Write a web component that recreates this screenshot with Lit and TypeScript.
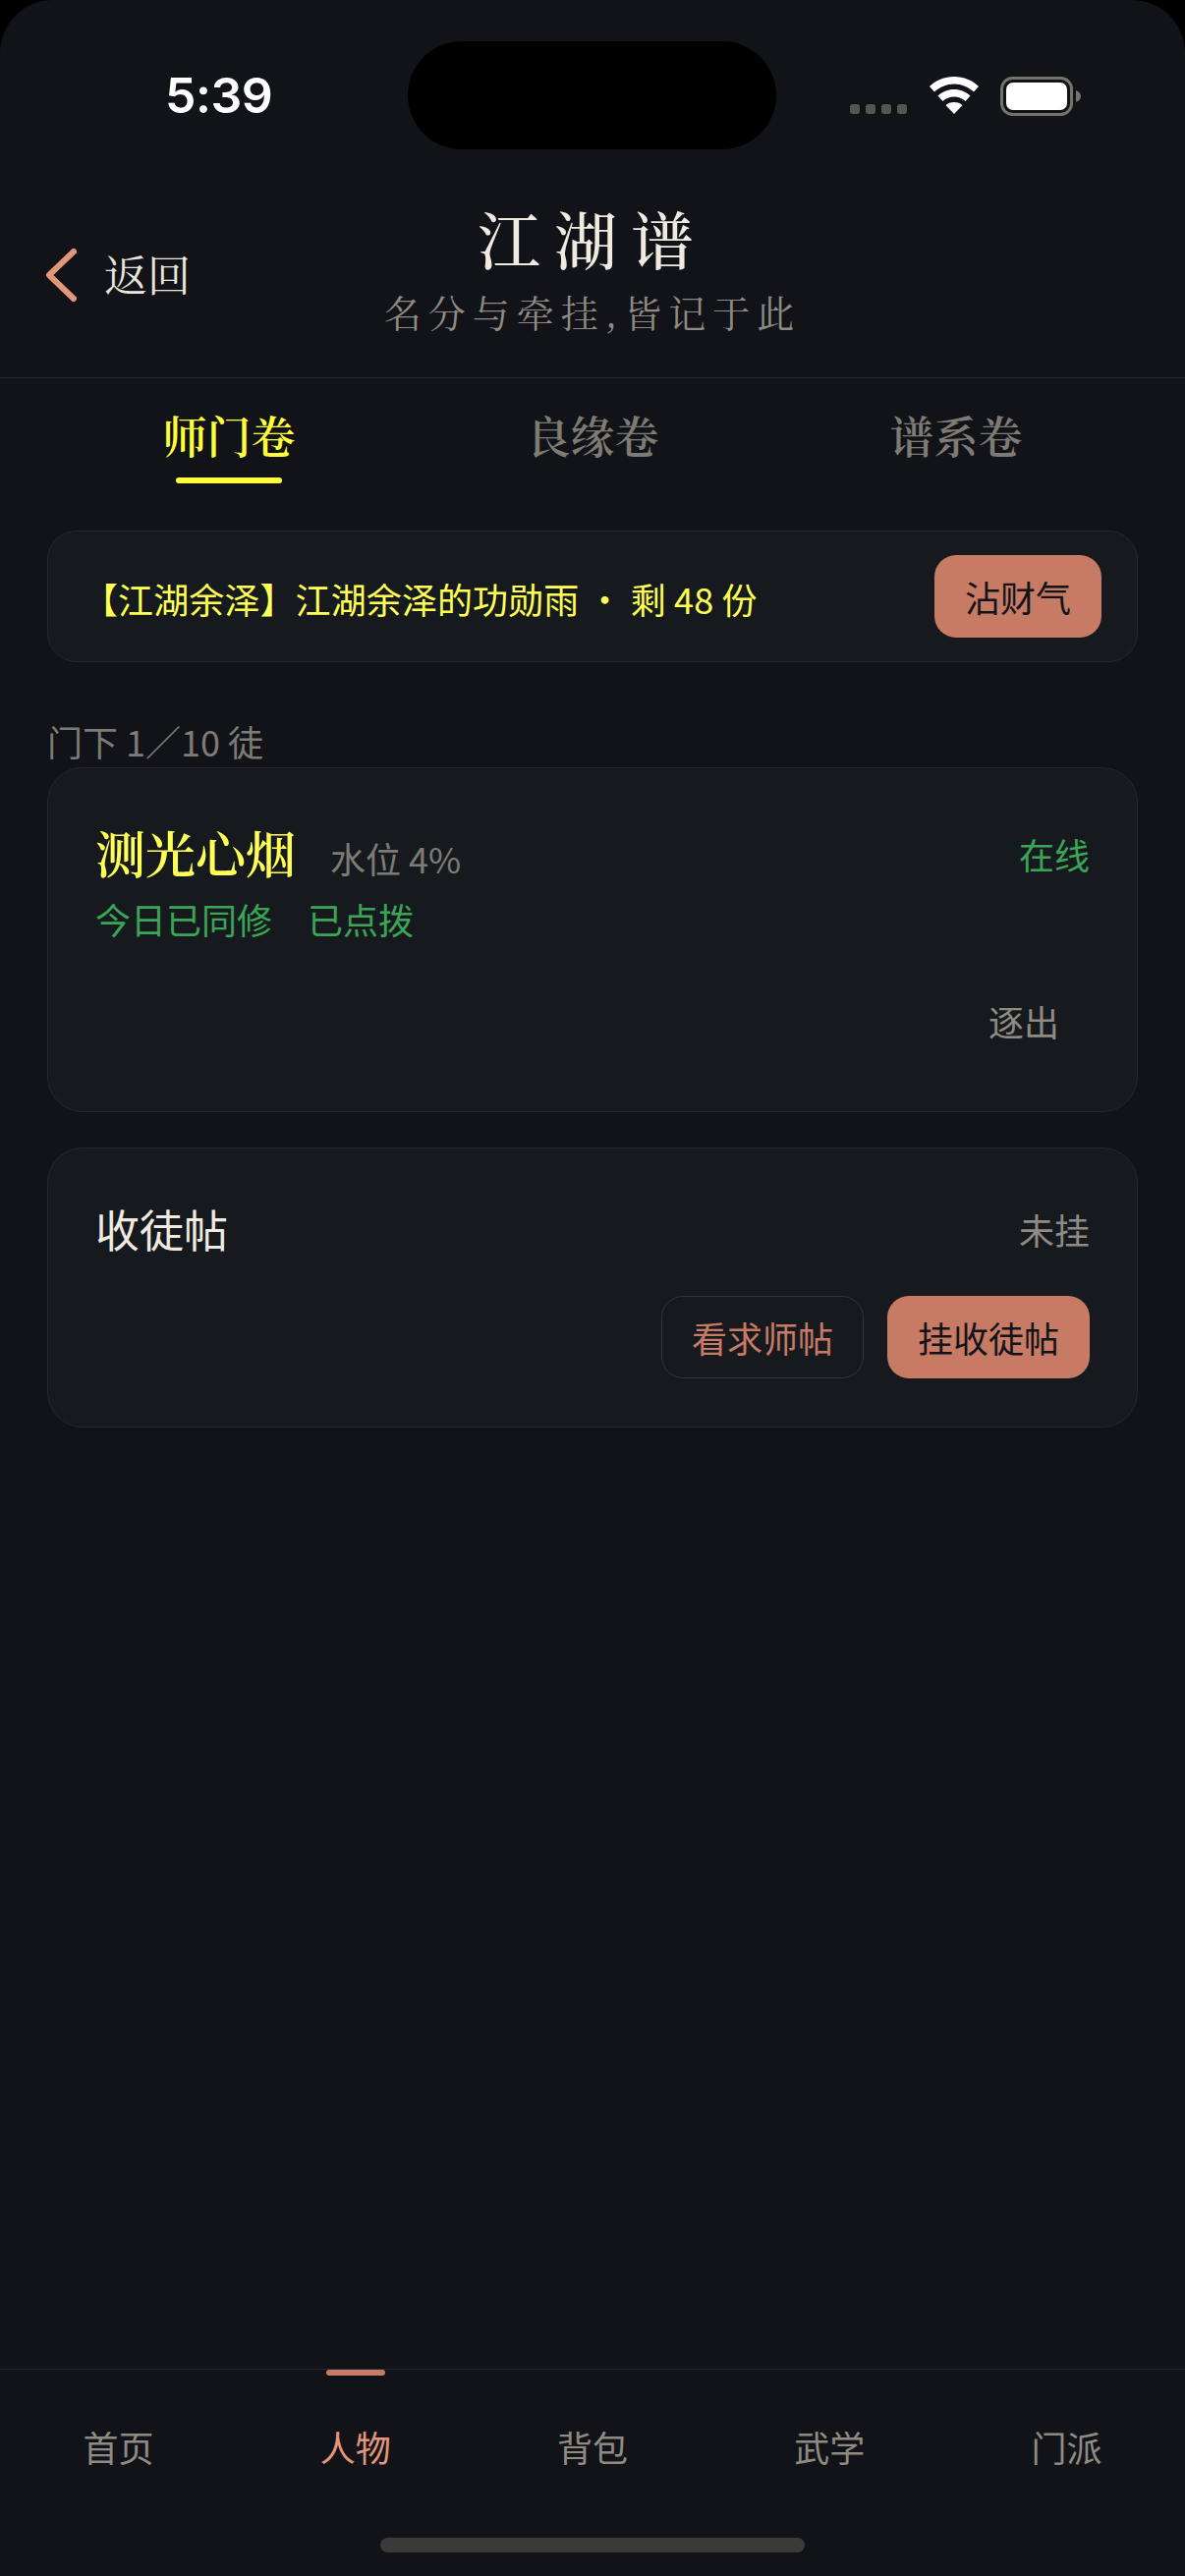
import { LitElement, html, css, svg } from "lit";
import { customElement } from "lit/decorators.js";

@customElement("app-root")
export class AppRoot extends LitElement {
  static styles = css`
    :host { display: block; width: 1206px; height: 2622px; background: #000; overflow: hidden;
      --sans: "Noto Sans CJK SC", "Noto Sans", sans-serif;
      --serif: "Noto Serif CJK SC", "Noto Serif SC", "Noto Sans CJK SC", serif;
      font-family: var(--sans); }
    * { box-sizing: border-box; }
    .phone { position: relative; width: 1206px; height: 2622px; background: #111318; border-radius: 54px 54px 0 0; overflow: hidden; display: flex; flex-direction: column; }
    .status { height: 188px; flex: none; display: flex; justify-content: space-between; padding: 0 104px 0 168px; }
    .time { font: 600 50px/52px Inter, "Liberation Sans", sans-serif; color: #fff; margin-top: 71px; letter-spacing: -.5px; }
    .island { position: absolute; left: 415px; top: 42px; width: 375px; height: 110px; border-radius: 55px; background: #000; }
    .sys { display: flex; align-items: flex-start; margin-top: 78px; }
    .dots { display: flex; gap: 6px; margin-top: 28px; margin-right: 22px; }
    .dots i { display: block; width: 10px; height: 10px; border-radius: 3px; background: #55564f; }
    .wifi { width: 52px; height: 38px; margin-right: 21px; }
    .batt { width: 84px; height: 40px; }
    .head { position: relative; height: 197px; flex: none; border-bottom: 1px solid #272a2d; display: flex; flex-direction: column; align-items: center; }
    .title { font: 500 64px/80px var(--serif); letter-spacing: 14px; color: #f0ebe0; margin-top: 13px; }
    .sub { font: 400 38px/52px var(--serif); letter-spacing: 7px; color: #8f8b82; margin-top: 10px; }
    .back { position: absolute; left: 46px; top: 60px; display: flex; align-items: center; gap: 28px; font: 400 44px/56px var(--serif); color: #e9e5da; }
    .back svg { width: 32px; height: 54px; display: block; margin-top: 5px; }
    .tabs { display: grid; grid-template-columns: repeat(3, 1fr); padding: 0 48px; height: 155px; flex: none; }
    .tab { display: flex; flex-direction: column; align-items: center; padding-top: 28px; font: 600 45px/60px var(--serif); color: #7e7b74; }
    .tab.on { color: #ffff3c; }
    .tab i { display: block; width: 108px; height: 6px; border-radius: 3px; background: #ffff3c; margin-top: 13px; }
    .content { flex: 1; padding: 0 48px; display: flex; flex-direction: column; }
    .card { background: #161a1f; border: 1px solid #25282b; }
    .banner { height: 134px; border-radius: 30px; display: flex; align-items: center; justify-content: space-between; padding: 0 36px 0 35px; font-size: 36px; color: #ffff55; }
    .banner span { margin-top: 4px; letter-spacing: .1px; }
    .btn { height: 84px; border-radius: 22px; font-size: 36px; display: flex; align-items: center; justify-content: center; background: #c77a64; color: #12141a; }
    .btn.ghost { background: transparent; border: 1px solid #33373a; color: #c77a64; }
    .banner .btn { width: 170px; }
    .label { font-size: 36px; line-height: 46px; color: #7e7b74; margin-top: 57px; height: 50px; }
    .disciple { height: 351px; border-radius: 36px; padding: 0 48px; margin-bottom: 36px; }
    .row { display: flex; align-items: flex-start; justify-content: space-between; }
    .row1 { padding-top: 50px; }
    .who { display: flex; align-items: baseline; gap: 35px; }
    .name { font: 600 51px/70px var(--serif); color: #ffff55; }
    .lv { font-size: 36px; line-height: 60px; color: #7e7b74; }
    .green { color: #3aa555; font-size: 36px; line-height: 50px; }
    .online { margin-top: 12px; }
    .marks { display: flex; gap: 36px; margin-top: 7px; }
    .kick { text-align: right; padding-right: 31px; margin-top: 54px; font-size: 36px; line-height: 50px; color: #8f8b82; }
    .post { height: 285px; border-radius: 36px; padding: 0 48px; }
    .post .row { height: 150px; align-items: center; padding-top: 14px; }
    .pname { font-size: 45px; line-height: 60px; color: #f0ebe0; }
    .pstate { font-size: 36px; color: #8f8b82; }
    .acts { display: flex; justify-content: flex-end; gap: 24px; }
    .acts .btn { width: 206px; }
    .nav { height: 211px; flex: none; border-top: 1px solid #272a2d; display: grid; grid-template-columns: repeat(5, 1fr); position: relative; }
    .nav div { position: relative; display: flex; justify-content: center; padding-top: 53px; font-size: 36px; line-height: 50px; color: #8f8b82; }
    .nav div.on { color: #e4967a; }
    .nav div.on::before { content: ""; position: absolute; top: 0; left: 91px; width: 60px; height: 6px; border-radius: 3px; background: #c77a64; }
    .home { position: absolute; left: 387px; bottom: 24px; width: 432px; height: 15px; border-radius: 8px; background: #3a3a38; }
  `;

  render() {
    return html`<div class="phone">
      <div class="status">
        <div class="time">5:39</div>
        <div class="sys">
          <div class="dots"><i></i><i></i><i></i><i></i></div>
          <svg class="wifi" viewBox="0 0 52 38"><path fill="#fff" d="M26 0C16 0 7.500 3.800 1 10l5 5.500C11.500 10.500 18.500 7.500 26 7.500s14.500 3 20 8l5-5.500C44.500 3.800 36 0 26 0zM26 13c-6.500 0-12 2.400-16.500 6.500l5 5.500c3-2.800 7-4.500 11.500-4.500s8.500 1.700 11.500 4.500l5-5.500C38 15.400 32.500 13 26 13zM26 26c-3.500 0-6.500 1.200-8.500 3.200L26 38l8.500-8.800C32.500 27.200 29.500 26 26 26z"/></svg>
          ${svg`<svg class="batt" viewBox="0 0 84 40"><rect x="1.500" y="1.500" width="71" height="37" rx="11" fill="none" stroke="#74746c" stroke-width="3"/><rect x="6" y="6" width="62" height="28" rx="7" fill="#fff"/><path d="M77 14c3 1 5 3 5 6s-2 5-5 6z" fill="#74746c"/></svg>`}
        </div>
      </div>
      <div class="island"></div>
      <div class="head">
        <div class="title">江湖谱</div>
        <div class="sub">名分与牵挂,皆记于此</div>
        <div class="back"><svg viewBox="0 0 32 54"><path d="M29 3 4 27l25 24" fill="none" stroke="#e4967a" stroke-width="6" stroke-linecap="round" stroke-linejoin="round"/></svg><span>返回</span></div>
      </div>
      <div class="tabs">
        <div class="tab on">师门卷<i></i></div>
        <div class="tab">良缘卷</div>
        <div class="tab">谱系卷</div>
      </div>
      <div class="content">
        <div class="card banner"><span>【江湖余泽】江湖余泽的功勋雨 · 剩 48 份</span><div class="btn">沾财气</div></div>
        <div class="label">门下 1／10 徒</div>
        <div class="card disciple">
          <div class="row row1">
            <div class="who"><span class="name">测光心烟</span><span class="lv">水位 4%</span></div>
            <span class="green online">在线</span>
          </div>
          <div class="marks green"><span>今日已同修</span><span>已点拨</span></div>
          <div class="kick">逐出</div>
        </div>
        <div class="card post">
          <div class="row"><span class="pname">收徒帖</span><span class="pstate">未挂</span></div>
          <div class="acts"><div class="btn ghost">看求师帖</div><div class="btn">挂收徒帖</div></div>
        </div>
      </div>
      <div class="nav">
        <div>首页</div><div class="on">人物</div><div>背包</div><div>武学</div><div>门派</div>
      </div>
      <div class="home"></div>
    </div>`;
  }
}
